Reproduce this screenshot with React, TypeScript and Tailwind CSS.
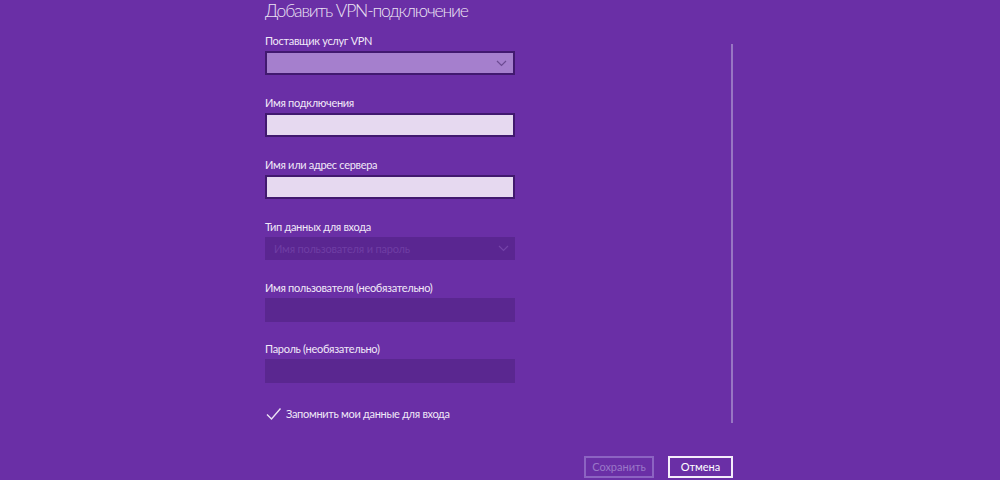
import React from "react";

const font = { fontFamily: 'Lato, "Noto Sans", sans-serif' };

function Label({ children }: { children: React.ReactNode }) {
  return (
    <div className="h-[16px] mb-[2px] text-[11px] leading-[16px] tracking-[-0.3px] text-[#f1e9f8] whitespace-nowrap">{children}</div>
  );
}

function Chevron({ color }: { color: string }) {
  return (
    <svg width="11" height="7" viewBox="0 0 11 7" className="shrink-0">
      <path d="M1 1 L5.5 5.5 L10 1" fill="none" stroke={color} strokeWidth="1.2" />
    </svg>
  );
}

export default function App() {
  return (
    <div className="w-[1000px] h-[480px] bg-[#6a2fa6] overflow-hidden" style={font}>
      <div className="ml-[265px] w-[469px] flex flex-col">
        <div className="flex">
          <div className="w-[250px] flex flex-col">
            <div className="mt-[-1px] h-[24px] text-[17.5px] leading-[24px] tracking-[-1.15px] font-light text-[#ece3f4] whitespace-nowrap">
              Добавить VPN-подключение
            </div>
            <div className="mt-[10px]">
              <Label>Поставщик услуг VPN</Label>
              <div className="h-[24px] border-2 border-[#41196f] bg-[#a57fcd] flex items-center justify-end pr-[6px]">
                <Chevron color="#6c4b92" />
              </div>
            </div>
            <div className="mt-[20px]">
              <Label>Имя подключения</Label>
              <div className="h-[24px] border-2 border-[#41196f] bg-[#e6d9f0]" />
            </div>
            <div className="mt-[20px]">
              <Label>Имя или адрес сервера</Label>
              <div className="h-[24px] border-2 border-[#41196f] bg-[#e6d9f0]" />
            </div>
            <div className="mt-[20px]">
              <Label>Тип данных для входа</Label>
              <div className="h-[23px] bg-[#5a2691] flex items-center justify-between pl-[9px] pr-[6px]">
                <span className="text-[11px] leading-[16px] tracking-[-0.2px] text-[#6f3ea4] whitespace-nowrap">Имя пользователя и пароль</span>
                <Chevron color="#7443a8" />
              </div>
            </div>
            <div className="mt-[20px]">
              <Label>Имя пользователя (необязательно)</Label>
              <div className="h-[24px] bg-[#5a2790]" />
            </div>
            <div className="mt-[19px]">
              <Label>Пароль (необязательно)</Label>
              <div className="h-[24px] bg-[#5a2790]" />
            </div>
            <div className="mt-[23px] flex items-center h-[16px]">
              <svg width="16" height="14" viewBox="0 0 16 14" className="ml-[1px]">
                <path d="M1 7.5 L5.5 12 L14.5 1.5" fill="none" stroke="#ece3f4" strokeWidth="1.4" />
              </svg>
              <span className="ml-[4px] text-[11px] leading-[16px] tracking-[-0.3px] text-[#f1e9f8] whitespace-nowrap">
                Запомнить мои данные для входа
              </span>
            </div>
          </div>
          <div className="ml-auto mr-[1px] mt-[44px] w-[2px] h-[379px] bg-[#9876c3]" />
        </div>
        <div className="mt-[33px] flex justify-end gap-[14px] mr-[1px]">
          <div className="w-[70px] h-[22px] border-2 border-[#8c63c2] flex items-center justify-center text-[11px] text-[#9a78c8]">
            Сохранить
          </div>
          <div className="w-[65px] h-[22px] border-2 border-[#f4eefa] flex items-center justify-center text-[11px] text-white">
            Отмена
          </div>
        </div>
      </div>
    </div>
  );
}
